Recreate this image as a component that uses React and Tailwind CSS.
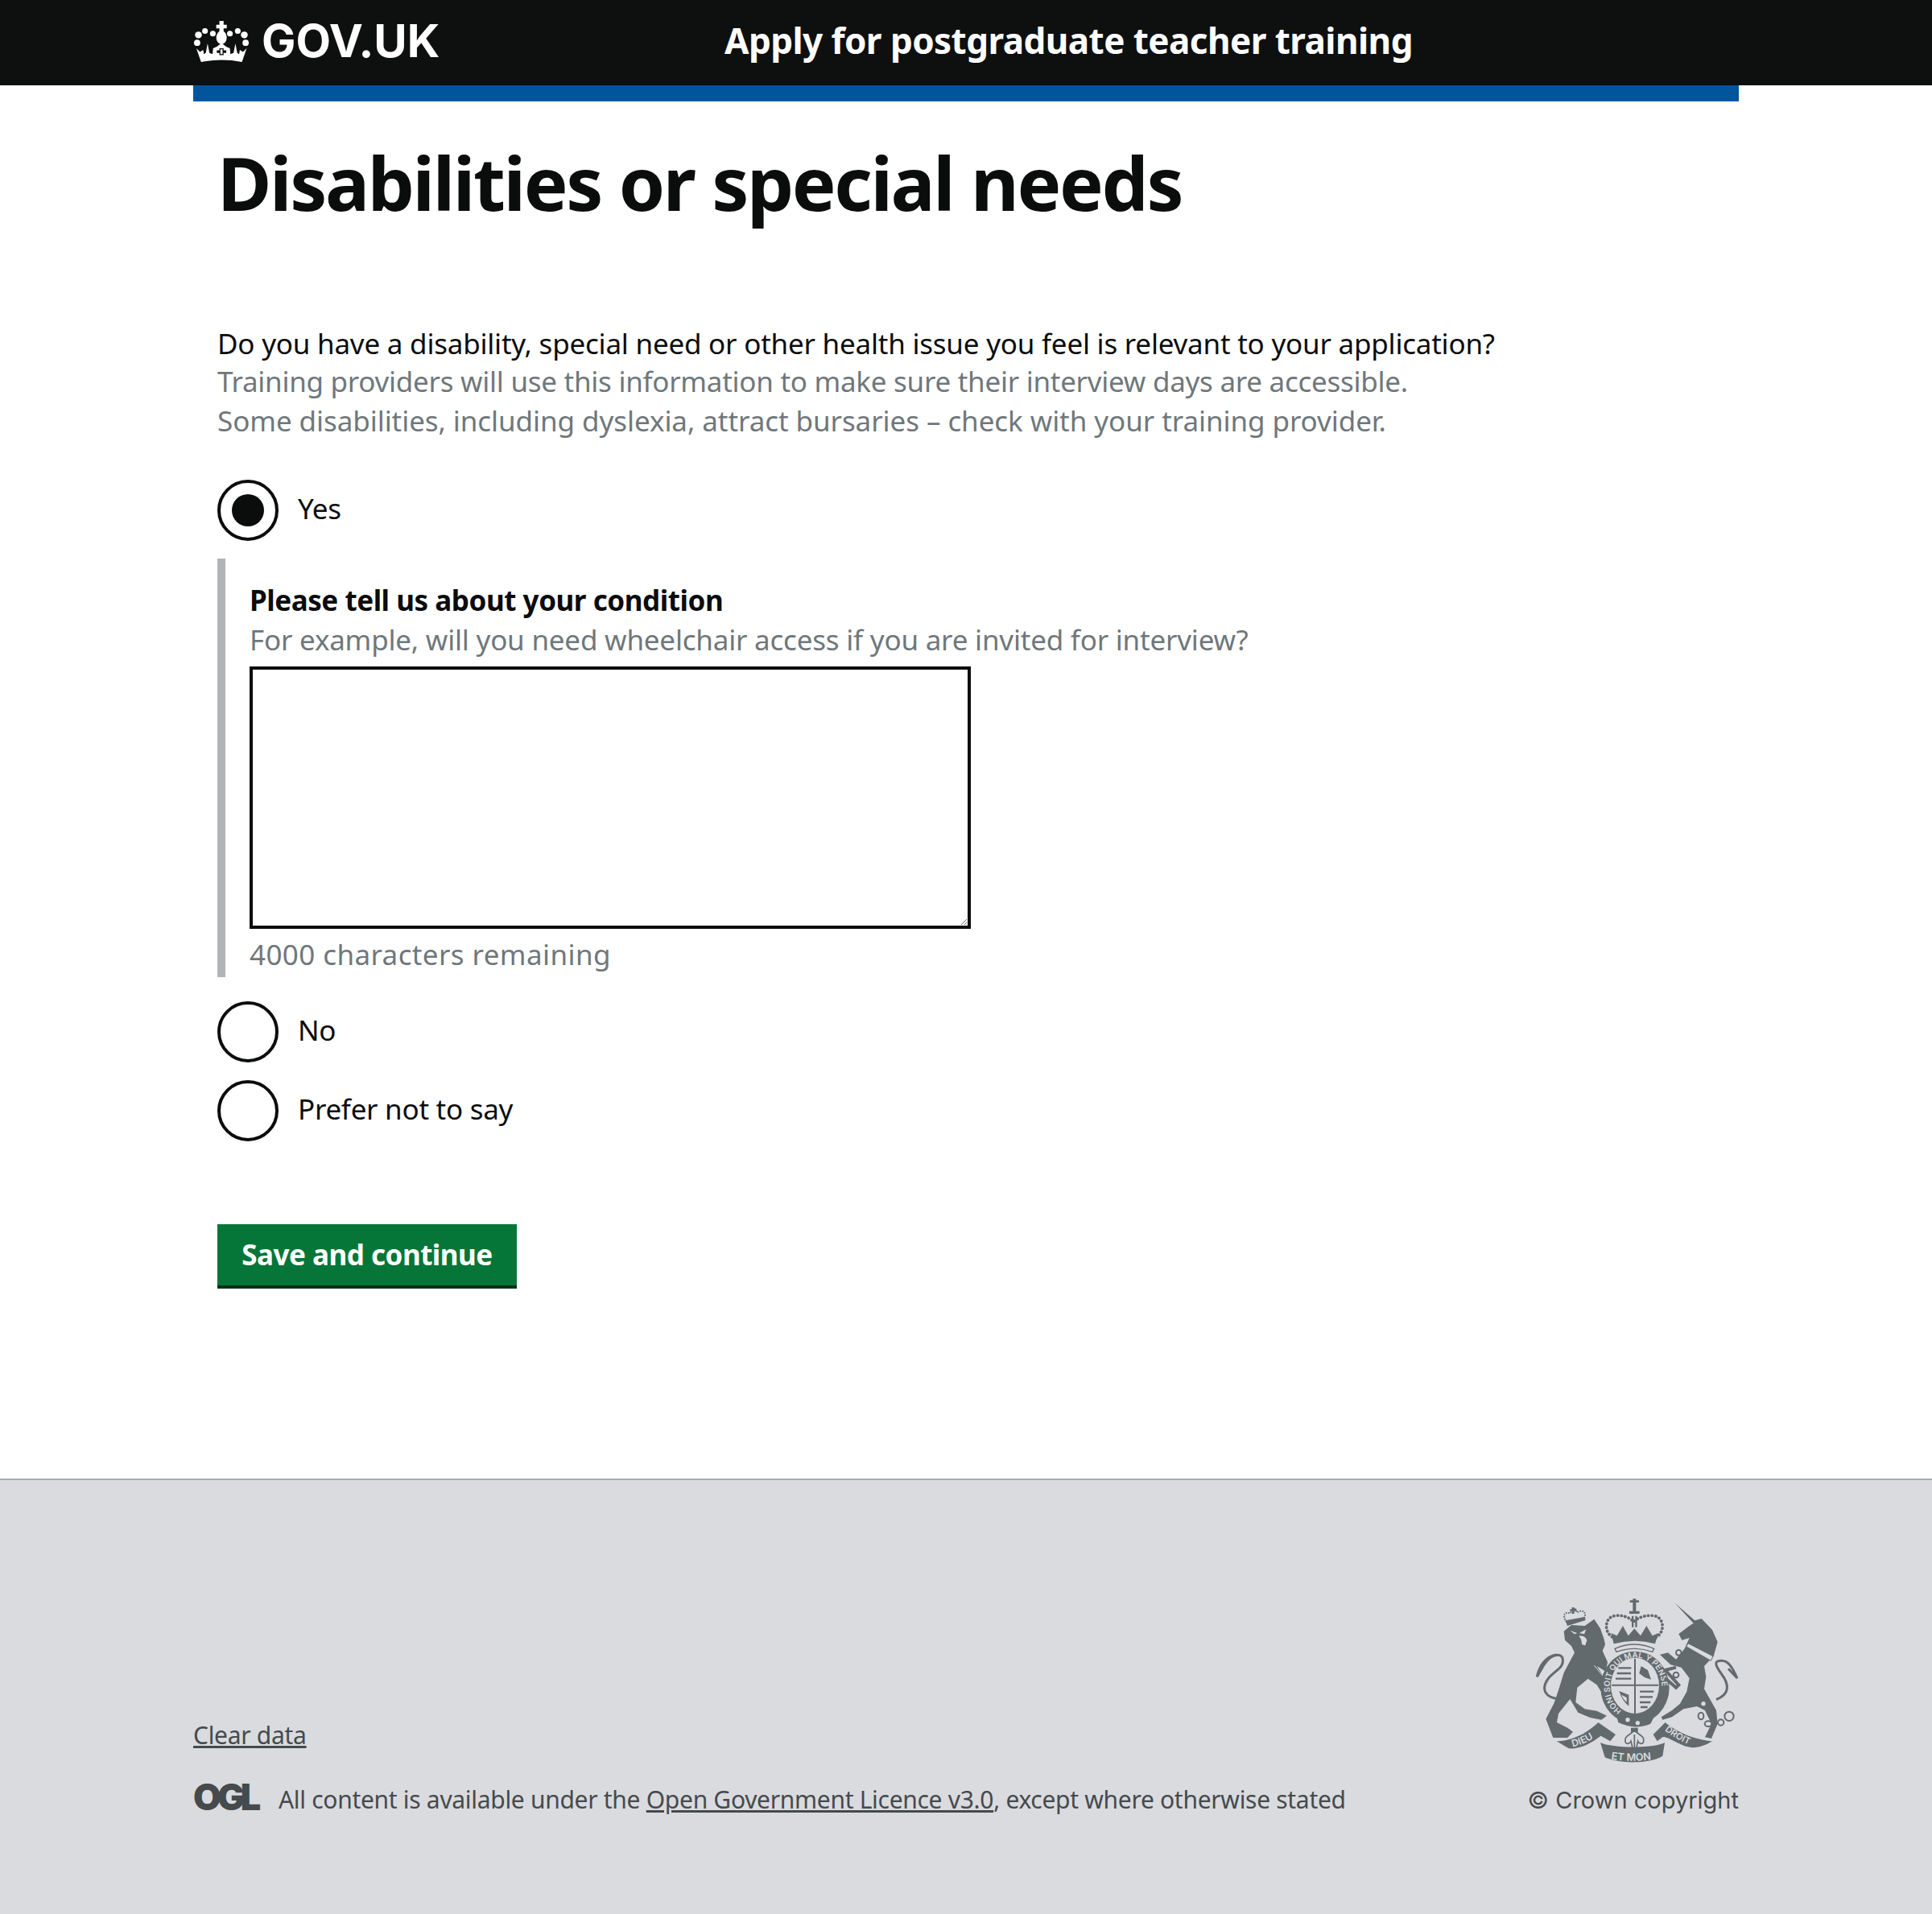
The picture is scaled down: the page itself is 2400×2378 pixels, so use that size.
const font = "font-['Noto_Sans',sans-serif]";
const bodyText = "text-[35px] tracking-[-0.27px]";

const Crown = () => (
  <svg width="70" height="53" viewBox="60 70 215 160" fill="white">
    <path d="M160 72h16v14h12v14h-12v12h-16v-12h-12V86h12z" />
    <ellipse cx="168" cy="135" rx="20" ry="26" />
    <circle cx="80" cy="125" r="13" />
    <circle cx="105" cy="110" r="11" />
    <circle cx="135" cy="120" r="11" />
    <circle cx="200" cy="120" r="11" />
    <circle cx="230" cy="110" r="11" />
    <circle cx="255" cy="125" r="13" />
    <circle cx="75" cy="155" r="12" />
    <circle cx="260" cy="155" r="12" />
    <path d="M90 228L72 176L86 190L98 182L101 198L108 194L115 158L122 194L134 198L136 176L150 170L168 156L186 170L200 176L202 198L214 194L221 158L228 194L235 198L238 182L250 190L264 176L246 228Q168 214 90 228Z" />
    <path d="M160 176h16v26h-16z M150 184h36v10h-36z" fill="#0e0f0f" />
    <path d="M164 180h8v18h-8z" fill="white" />
  </svg>
);

const Crest = () => {
  const c = "#626a6e";
  const bg = "#dadbdf";
  return (
    <svg width="252" height="208" viewBox="118 50 756 624" fill={c}>
      <defs>
        <path id="garter" d="M437 472A97 108 0 1 1 555 462" />
        <path id="ribbon-left" d="M255 606Q320 590 365 550" />
        <path id="ribbon-mid" d="M398 652Q485 666 578 648" />
        <path id="ribbon-right" d="M597 545Q650 585 712 607" />
      </defs>

      {/* lion */}
      <path d="M222 175L250 152L300 155L335 130L358 165L372 205L376 225L366 248L385 290L378 325L345 305L388 372L396 408L370 415L345 375L312 352L272 385L266 440L300 465L345 472L382 490L362 505L320 497L275 478L245 428L202 482L196 515L236 535L256 550L236 572L182 572L155 502L186 442L205 385L222 330L262 255L250 230L226 208Z" />
      <path d="M210 428C150 425 135 390 165 350C190 320 228 310 216 272C205 255 170 265 148 300L122 345C130 305 155 268 195 262" fill="none" stroke={c} strokeWidth="9" />
      <path d="M245 172L272 182L262 186ZM280 182L305 168L298 186Z" fill={bg} />
      <path d="M278 192Q300 190 308 208L302 228L290 225L286 205Z" fill={bg} />
      <path d="M335 302L392 372" stroke={bg} strokeWidth="3" />

      {/* lion crown */}
      <path d="M232 140C215 118 225 100 245 108L262 88L272 105C292 92 308 105 298 125Z" fill={bg} stroke={c} strokeWidth="6" strokeDasharray="5 4" />
      <path d="M228 135L300 122L303 134L235 155Z" />
      <path d="M252 86h9v24h-9zM245 93h24v7h-24z" />

      {/* shield crown */}
      <path d="M468 60h34v8h-34zM479 54h12v46h-12zM466 100h38v10h-38zM475 118h7v42h-7zM488 118h7v42h-7z" />
      <path d="M415 202C370 190 370 125 410 118C440 112 470 125 482 140C495 125 530 112 560 118C600 125 600 190 555 202" fill="none" stroke={c} strokeWidth="11" strokeDasharray="1 13" strokeLinecap="round" />
      <path d="M398 182L420 192L442 155L462 192L485 165L508 192L530 155L552 192L574 182L562 222Q485 200 408 222Z" />
      <path d="M412 240Q485 208 558 240L552 252Q485 228 418 252Z" fill={bg} stroke={c} strokeWidth="4" />

      {/* shield */}
      <ellipse cx="487" cy="385" rx="128" ry="135" />
      <ellipse cx="487" cy="378" rx="90" ry="104" fill={bg} />
      <path d="M400 376H575M487 278V486" stroke={c} strokeWidth="6" />
      <g stroke={c} strokeWidth="7" fill="none">
        <path d="M425 312h48M420 332h52M415 352h58" />
        <path d="M505 400h52M505 420h48M505 440h40M508 458h26" />
      </g>
      <path d="M510 305l25 15 12 35-24-8-20-15zM428 398l36 14v42q-24-18-36-56z" />
      <path d="M436 412l20 10v18q-12-10-20-28z" fill={bg} />
      <text fontFamily="'Inter',sans-serif" fontSize="30" fontWeight="600" fill={bg}>
        <textPath href="#garter">HONI SOIT QUI MAL Y PENSE</textPath>
      </text>
      <path d="M415 480Q490 535 560 490L545 520Q485 545 425 515Z" />
      <circle cx="460" cy="505" r="8" fill={bg} />
      <circle cx="497" cy="517" r="8" fill={bg} />

      {/* unicorn */}
      <path d="M636 70L710 135L735 128L775 170L795 215L780 268L745 305L752 345L745 390L790 470L795 520L772 575L748 570L772 520L748 470L718 455L668 465L625 495L590 505L585 495L625 470L655 445L680 400L690 350L660 310L620 300L580 262L610 255L640 280L672 240L690 200L662 208L650 185L690 155L705 145Z" />
      <path d="M678 232L770 285L778 268L685 220Z" fill={bg} stroke={c} strokeWidth="3" />
      <path d="M790 430C840 410 840 375 810 335C785 300 780 285 810 285C835 285 850 310 868 350L835 315" fill="none" stroke={c} strokeWidth="9" />
      <path d="M640 310L600 320L650 375L640 385L600 350" fill="none" stroke={c} strokeWidth="12" />
      <g fill="none" stroke={c} strokeWidth="6">
        <circle cx="650" cy="255" r="10" />
        <circle cx="640" cy="338" r="10" />
        <ellipse cx="733" cy="491" rx="10" ry="13" />
        <ellipse cx="760" cy="520" rx="13" ry="10" />
        <circle cx="807" cy="515" r="11" />
        <circle cx="838" cy="492" r="17" />
      </g>
      <circle cx="772" cy="360" r="11" fill={bg} />
      <circle cx="765" cy="408" r="8" fill={bg} />
      <circle cx="742" cy="445" r="8" fill={bg} />

      {/* motto ribbons */}
      <path d="M195 585C260 585 320 545 350 515L415 560L395 585L360 565C320 595 280 615 240 612Z" />
      <path d="M358 590C400 612 560 612 598 590L590 640C540 670 430 670 375 645Z" />
      <path d="M555 560L600 515C640 550 710 580 775 585C735 610 700 615 665 600C630 585 600 565 590 570L570 585Z" />
      <g fontFamily="'Inter',sans-serif" fontWeight="600" fill={bg}>
        <text fontSize="36"><textPath href="#ribbon-left">DIEU</textPath></text>
        <text fontSize="38"><textPath href="#ribbon-mid">ET MON</textPath></text>
        <text fontSize="34"><textPath href="#ribbon-right">DROIT</textPath></text>
      </g>

      {/* fleur de lis */}
      <path d="M472 535h26v22h-26z" />
      <path d="M485 545C505 565 525 565 518 590C510 600 500 590 498 585L492 610H478L472 585C470 590 460 600 452 590C445 565 465 565 485 545Z" fill={bg} stroke={c} strokeWidth="5" />
      <path d="M485 610V560" stroke={c} strokeWidth="5" />
    </svg>
  );
};

const Radio = ({ label, checked }) => (
  <label className="flex items-center">
    <span className="w-[76px] h-[76px] rounded-full border-4 border-[#0b0c0c] flex items-center justify-center">
      {checked && <span className="block w-10 h-10 rounded-full bg-[#0b0c0c]" />}
    </span>
    <span className={`ml-6 ${bodyText} leading-[50px] text-[#0b0c0c] -mt-1`}>{label}</span>
  </label>
);

export default function App() {
  return (
    <div className={`${font} min-h-[2378px] flex flex-col bg-white`}>
      <header className="bg-[#0e0f0f] h-[106px]">
        <div className="w-[1920px] mx-auto flex items-center h-full">
          <div className="flex items-center w-[660px] -mt-1">
            <Crown />
            <span className="ml-[15px] text-white text-[56.5px] leading-none font-bold font-['Inter',sans-serif]">GOV.UK</span>
          </div>
          <span className="text-white text-[44px] tracking-[-0.55px] font-bold leading-none -mt-[6px]">Apply for postgraduate teacher training</span>
        </div>
      </header>
      <div className="w-[1920px] mx-auto h-5 bg-[#01559c]" />

      <main className="w-[1920px] mx-auto px-[30px] flex-1">
        <h1 className="text-[92px] tracking-[-2.35px] leading-[110px] font-bold text-[#0b0c0c] mt-[46px]">Disabilities or special needs</h1>

        <p className="mt-[122px] text-[35px] tracking-[-0.22px] leading-[46px] text-[#0b0c0c]">Do you have a disability, special need or other health issue you feel is relevant to your application?</p>
        <p className={`${bodyText} leading-[48px] text-[#6f777b]`}>Training providers will use this information to make sure their interview days are accessible.</p>
        <p className="text-[35px] tracking-[-0.07px] leading-[50px] text-[#6f777b]">Some disabilities, including dyslexia, attract bursaries – check with your training provider.</p>

        <div className="mt-[48px]">
          <Radio label="Yes" checked />
        </div>

        <div className="mt-[22px] border-l-[10px] border-[#b1b4b6] pl-[30px] h-[520px] pt-[30px]">
          <p className="text-[35px] tracking-[-0.45px] leading-[44px] font-bold text-[#0b0c0c]">Please tell us about your condition</p>
          <p className="text-[35px] tracking-[-0.21px] leading-[50px] text-[#6f777b] mt-[2px]">For example, will you need wheelchair access if you are invited for interview?</p>
          <textarea className="block w-[896px] h-[326px] border-4 border-[#0b0c0c] mt-[8px]" />
          <p className="text-[35px] tracking-[0.4px] leading-[50px] text-[#6f777b] mt-[7px]">4000 characters remaining</p>
        </div>

        <div className="mt-[30px] flex flex-col gap-[22px]">
          <Radio label="No" />
          <Radio label="Prefer not to say" />
        </div>

        <button className="mt-[103px] block w-[372px] h-[80px] bg-[#067638] border-b-4 border-[#002d18] text-white text-[35px] tracking-[-0.5px] font-bold">Save and continue</button>
      </main>

      <footer className="h-[541px] bg-[#dadbdf] border-t-2 border-[#a1acb2]">
        <div className="w-[1920px] mx-auto h-full flex justify-between items-start pt-[146px] text-[#454a4c]">
          <div className="pt-[151px]">
            <a className="text-[30px] tracking-[-0.3px] leading-[40px] underline">Clear data</a>
            <div className="flex items-center mt-[40px]">
              <span className="w-[82px] shrink-0 text-[45px] leading-none font-black tracking-[-5px] font-['Inter',sans-serif] -mt-[7px]">OGL</span>
              <span className="ml-6 text-[30px] tracking-[-0.3px] leading-[40px]">
                All content is available under the <a className="underline">Open Government Licence v3.0</a>, except where otherwise stated
              </span>
            </div>
          </div>
          <div className="flex flex-col items-end">
            <Crest />
            <span className="mt-6 text-[29px] leading-[40px] font-['Inter',sans-serif]">© Crown copyright</span>
          </div>
        </div>
      </footer>
    </div>
  );
}
